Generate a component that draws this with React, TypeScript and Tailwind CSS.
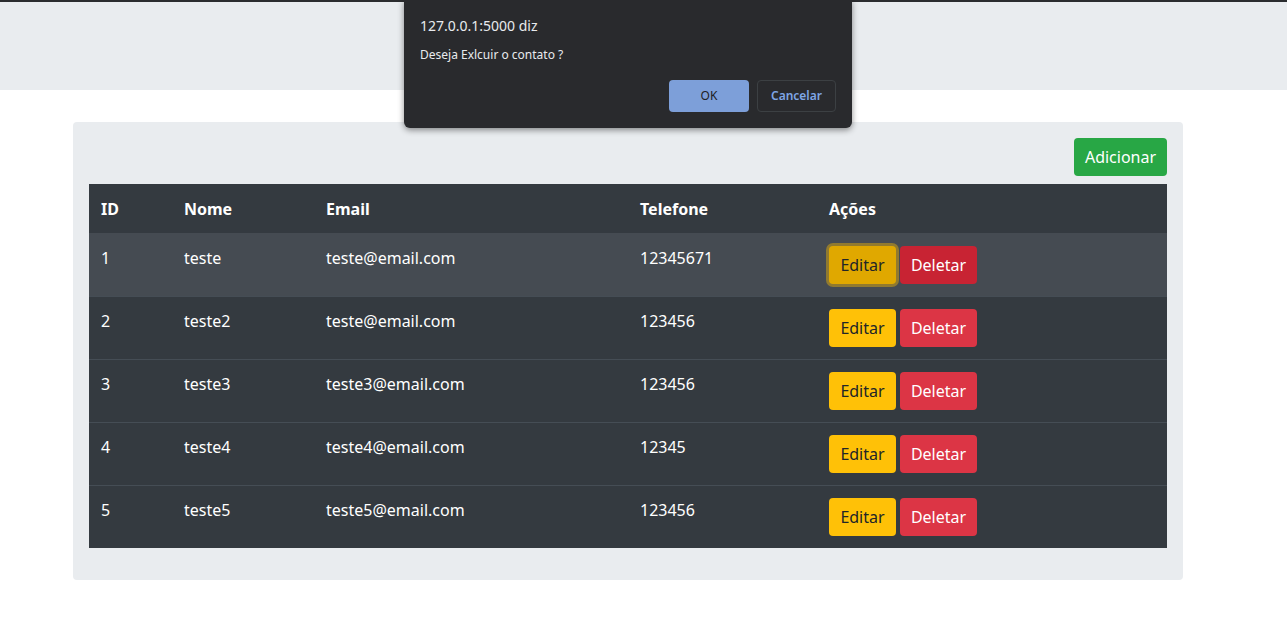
import React from 'react';

interface Contato {
  id: number;
  nome: string;
  email: string;
  telefone: string;
}

const contatos: Contato[] = [
  { id: 1, nome: 'teste', email: 'teste@email.com', telefone: '12345671' },
  { id: 2, nome: 'teste2', email: 'teste@email.com', telefone: '123456' },
  { id: 3, nome: 'teste3', email: 'teste3@email.com', telefone: '123456' },
  { id: 4, nome: 'teste4', email: 'teste4@email.com', telefone: '12345' },
  { id: 5, nome: 'teste5', email: 'teste5@email.com', telefone: '123456' },
];

const ConfirmDialog: React.FC = () => (
  <div className="absolute left-[404px] top-0 w-[448px] h-[128px] bg-[#292a2d] rounded-b-[6px] shadow-[0_2px_6px_rgba(0,0,0,0.45)] px-4 pt-[16px] font-['Noto_Sans','Liberation_Sans',sans-serif]">
    <p className="text-[14px] leading-5 text-[#e8eaed]">127.0.0.1:5000 diz</p>
    <p className="mt-[11px] text-[12px] leading-4 text-[#e8eaed]">Deseja Exlcuir o contato ?</p>
    <div className="mt-[17px] flex justify-end gap-2">
      <button className="w-[80px] h-[32px] rounded-[4px] bg-[#7d9fd9] text-[12px] text-[#202124]">OK</button>
      <button className="w-[79px] h-[32px] rounded-[4px] border border-[#3c4043] text-[12px] font-semibold text-[#7fa6e6]">
        Cancelar
      </button>
    </div>
  </div>
);

export default function App() {
  return (
    <div className="relative min-h-screen bg-white font-['Noto_Sans','Liberation_Sans',sans-serif] text-base">
      <div className="h-[90px] border-t-2 border-[#2b2c2f] bg-[#e9ecef]" />

      <div className="pt-[32px] pl-[73px]">
        <div className="w-[1110px] rounded bg-[#e9ecef] p-4">
          <div className="flex justify-end mb-2">
            <button className="w-[93px] h-[38px] rounded bg-[#28a745] text-white leading-6">Adicionar</button>
          </div>
          <table className="w-[1078px] table-fixed border-collapse bg-[#343a40] text-white text-left">
            <colgroup>
              <col className="w-[83px]" />
              <col className="w-[142px]" />
              <col className="w-[314px]" />
              <col className="w-[189px]" />
              <col className="w-[350px]" />
            </colgroup>
            <thead>
              <tr className="h-[49px]">
                <th className="px-3 pt-[2px] align-middle font-bold">ID</th>
                <th className="px-3 pt-[2px] align-middle font-bold">Nome</th>
                <th className="px-3 pt-[2px] align-middle font-bold">Email</th>
                <th className="px-3 pt-[2px] align-middle font-bold">Telefone</th>
                <th className="px-3 pt-[2px] align-middle font-bold">Ações</th>
              </tr>
            </thead>
            <tbody>
              {contatos.map((c, i) => (
                <tr
                  key={c.id}
                  className={`h-[63px] border-t ${i === 0 ? 'bg-[#454b52] border-[#454b52]' : 'border-[#454d55]'}`}
                >
                  <td className="px-3 pt-3 pb-3 align-top leading-6">{c.id}</td>
                  <td className="px-3 pt-3 pb-3 align-top leading-6">{c.nome}</td>
                  <td className="px-3 pt-3 pb-3 align-top leading-6">{c.email}</td>
                  <td className="px-3 pt-3 pb-3 align-top leading-6">{c.telefone}</td>
                  <td className="px-3 pt-3 pb-3 align-top">
                    <div className="flex gap-1">
                      {i === 0 ? (
                        <>
                          <button className="w-[67px] h-[38px] rounded bg-[#e0a800] text-[#212529] leading-6 shadow-[0_0_0_3px_rgba(222,170,12,0.5)]">
                            Editar
                          </button>
                          <button className="w-[77px] h-[38px] rounded bg-[#c82333] text-white leading-6">Deletar</button>
                        </>
                      ) : (
                        <>
                          <button className="w-[67px] h-[38px] rounded bg-[#ffc107] text-[#212529] leading-6">Editar</button>
                          <button className="w-[77px] h-[38px] rounded bg-[#dc3545] text-white leading-6">Deletar</button>
                        </>
                      )}
                    </div>
                  </td>
                </tr>
              ))}
            </tbody>
          </table>
          <div className="h-4" />
        </div>
      </div>

      <ConfirmDialog />
    </div>
  );
}
